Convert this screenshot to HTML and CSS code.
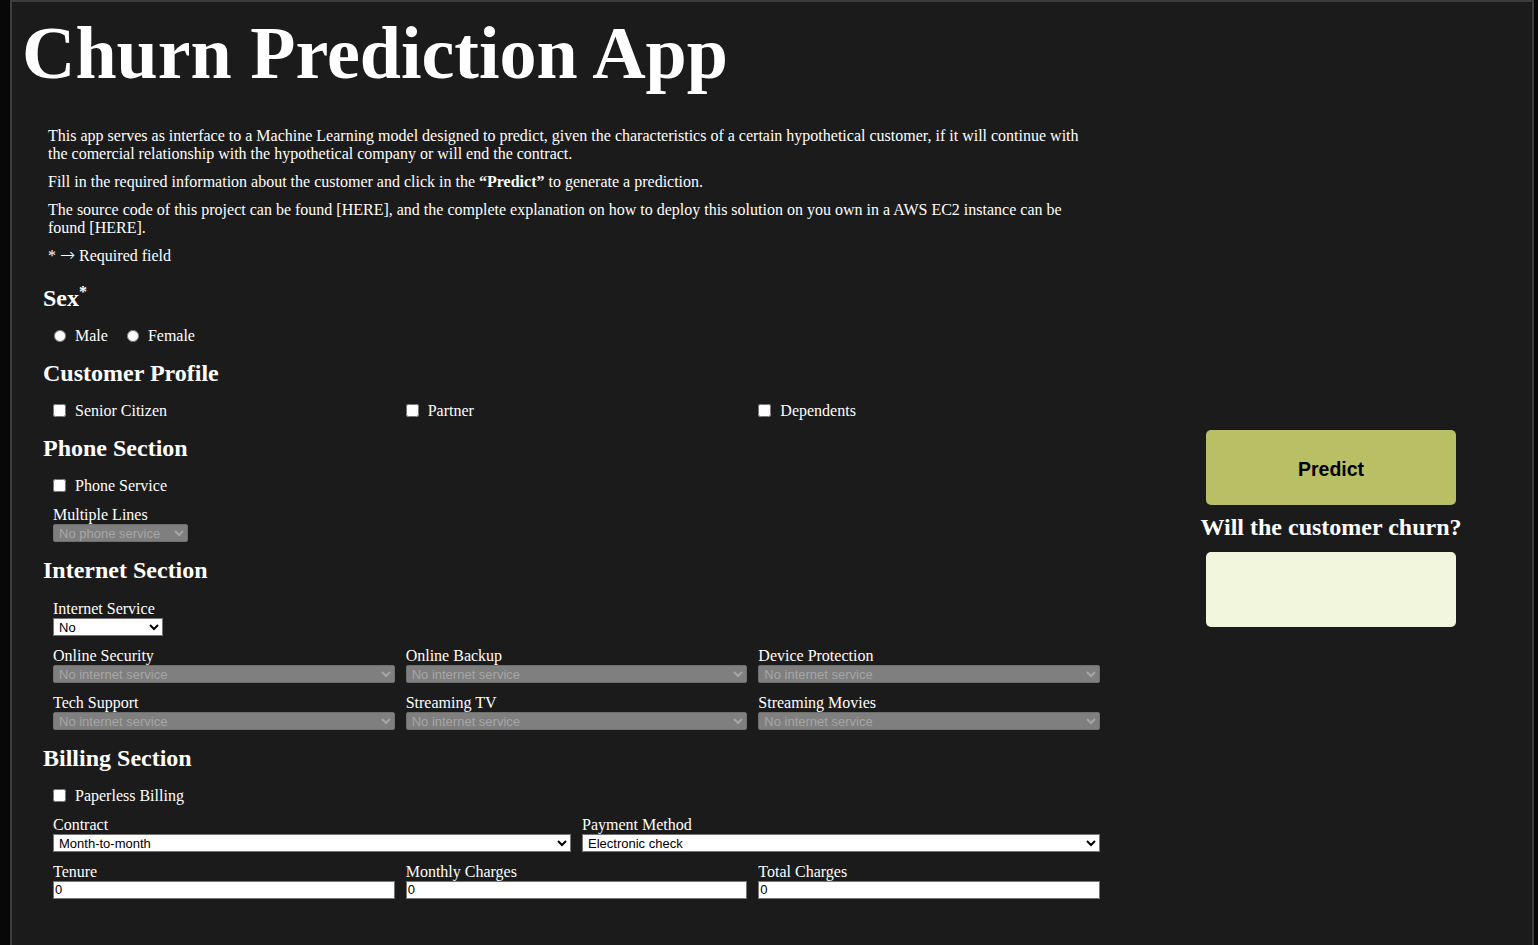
FILE: index.html
```html
<!DOCTYPE html>
<html lang="en">
<head>
<meta charset="utf-8">
<title>Churn Prediction App</title>
<link rel="stylesheet" href="styles.css">
</head>
<body>
<div class="page">
  <h1 class="title">Churn Prediction App</h1>
  <div class="main">
    <div class="left">
      <div class="intro">
        <p>This app serves as interface to a Machine Learning model designed to predict, given the characteristics of a certain hypothetical customer, if it will continue with the comercial relationship with the hypothetical company or will end the contract.</p>
        <p>Fill in the required information about the customer and click in the <b>“Predict”</b> to generate a prediction.</p>
        <p>The source code of this project can be found [HERE], and the complete explanation on how to deploy this solution on you own in a AWS EC2 instance can be found [HERE].</p>
        <p>* <span class="arrow">→</span> Required field</p>
      </div>
      <form class="form">
        <section class="section">
          <h2 class="sec-title">Sex<sup class="req">*</sup></h2>
          <div class="fields">
            <div class="radio-row">
              <label class="choice"><input type="radio" name="sex" class="radio"> Male</label>
              <label class="choice"><input type="radio" name="sex" class="radio"> Female</label>
            </div>
          </div>
        </section>
        <section class="section">
          <h2 class="sec-title">Customer Profile</h2>
          <div class="fields">
            <div class="grid3">
              <label class="choice"><input type="checkbox" class="check"> Senior Citizen</label>
              <label class="choice"><input type="checkbox" class="check"> Partner</label>
              <label class="choice"><input type="checkbox" class="check"> Dependents</label>
            </div>
          </div>
        </section>
        <section class="section">
          <h2 class="sec-title">Phone Section</h2>
          <div class="fields">
            <label class="choice"><input type="checkbox" class="check"> Phone Service</label>
            <div class="field">
              <span class="flabel">Multiple Lines</span>
              <select class="sel sel-off sel-ml" disabled><option>No phone service</option></select>
            </div>
          </div>
        </section>
        <section class="section">
          <h2 class="sec-title">Internet Section</h2>
          <div class="fields">
            <div class="field">
              <span class="flabel">Internet Service</span>
              <select class="sel sel-is"><option>No</option><option>DSL</option><option>Fiber optic</option></select>
            </div>
            <div class="grid3">
              <div class="field"><span class="flabel">Online Security</span><select class="sel sel-off" disabled><option>No internet service</option></select></div>
              <div class="field"><span class="flabel">Online Backup</span><select class="sel sel-off" disabled><option>No internet service</option></select></div>
              <div class="field"><span class="flabel">Device Protection</span><select class="sel sel-off" disabled><option>No internet service</option></select></div>
            </div>
            <div class="grid3">
              <div class="field"><span class="flabel">Tech Support</span><select class="sel sel-off" disabled><option>No internet service</option></select></div>
              <div class="field"><span class="flabel">Streaming TV</span><select class="sel sel-off" disabled><option>No internet service</option></select></div>
              <div class="field"><span class="flabel">Streaming Movies</span><select class="sel sel-off" disabled><option>No internet service</option></select></div>
            </div>
          </div>
        </section>
        <section class="section">
          <h2 class="sec-title">Billing Section</h2>
          <div class="fields">
            <label class="choice"><input type="checkbox" class="check"> Paperless Billing</label>
            <div class="grid2">
              <div class="field"><span class="flabel">Contract</span><select class="sel"><option>Month-to-month</option><option>One year</option><option>Two year</option></select></div>
              <div class="field"><span class="flabel">Payment Method</span><select class="sel"><option>Electronic check</option><option>Mailed check</option></select></div>
            </div>
            <div class="grid3">
              <div class="field"><span class="flabel">Tenure</span><input class="num" type="text" value="0"></div>
              <div class="field"><span class="flabel">Monthly Charges</span><input class="num" type="text" value="0"></div>
              <div class="field"><span class="flabel">Total Charges</span><input class="num" type="text" value="0"></div>
            </div>
          </div>
        </section>
      </form>
    </div>
    <aside class="right">
      <button class="predict" type="button">Predict</button>
      <h2 class="result-title">Will the customer churn?</h2>
      <div class="result-box"></div>
    </aside>
  </div>
</div>
</body>
</html>
```

FILE: styles.css
```css
html, body {
  margin: 0;
  padding: 0;
}
body {
  background: #080808;
  color: #ffffff;
  font-family: "Liberation Serif", "Times New Roman", serif;
  font-size: 16px;
}
.page {
  box-sizing: border-box;
  margin-left: 10px;
  width: 1524px;
  min-height: 945px;
  background: #1b1b1b;
  border: 2px solid #3d3d3d;
  border-bottom: none;
  padding-top: 9px;
}
.title {
  margin: 0;
  padding-left: 10px;
  font-size: 74px;
  line-height: 84px;
  font-weight: bold;
  color: #ffffff;
}
.main {
  display: flex;
  align-items: flex-start;
  margin-top: 32px;
  padding-left: 31px;
}
.left {
  width: 1063px;
}
.intro {
  padding-left: 5px;
  width: 1047px;
}
.intro p {
  margin: 0 0 10px;
  line-height: 18px;
}
.arrow {
  font-family: "DejaVu Sans", sans-serif;
  font-size: 18px;
  line-height: 0;
  font-weight: 200;
}
.form {
  margin-top: 19px;
}
.section {
  margin-bottom: 14.3px;
}
.sec-title {
  margin: 0 0 14.7px;
  font-size: 24px;
  line-height: 28px;
  font-weight: bold;
}
.req {
  font-size: 16px;
  line-height: 0;
  vertical-align: 9px;
}
.fields {
  padding-left: 10px;
  width: 1047px;
  display: flex;
  flex-direction: column;
  gap: 10px;
}
.radio-row {
  display: flex;
  gap: 18px;
}
.choice {
  display: flex;
  align-items: center;
  gap: 9px;
  line-height: 18px;
  height: 18px;
}
.radio {
  margin: 0 0 0 1px;
  width: 12px;
  height: 12px;
}
.check {
  margin: 0;
  width: 13px;
  height: 13px;
}
.grid3 {
  display: grid;
  grid-template-columns: repeat(3, 1fr);
  column-gap: 11px;
}
.grid2 {
  display: grid;
  grid-template-columns: 1fr 1fr;
  column-gap: 11px;
}
.field {
  display: flex;
  flex-direction: column;
  align-items: flex-start;
}
.flabel {
  display: block;
  line-height: 19px;
}
.sel {
  box-sizing: border-box;
  width: 100%;
  height: 18px;
  font-family: "Liberation Sans", Arial, sans-serif;
  font-size: 13px;
  color: #000000;
  background-color: #ffffff;
  border: 1px solid #767676;
  border-radius: 0;
  padding: 0 0 0 1px;
  margin: 0;
}
.sel-off {
  opacity: 1;
  background-color: #7f7f7f;
  color: #a6a6a6;
  border-color: #6f6f6f;
  border-radius: 2px;
}
.sel-ml {
  width: 135px;
}
.sel-is {
  width: 110px;
}
.num {
  box-sizing: border-box;
  width: 100%;
  height: 18px;
  margin: 0;
  padding: 0 1px;
  font-family: "Liberation Sans", Arial, sans-serif;
  font-size: 13px;
  color: #000000;
  background: #ffffff;
  border: 1px solid #767676;
}
.right {
  margin-left: 95px;
  margin-top: 303px;
  width: 260px;
  display: flex;
  flex-direction: column;
  align-items: center;
}
.predict {
  width: 250px;
  height: 75px;
  border: none;
  border-radius: 5px;
  background: #b8bf65;
  color: #000000;
  font-family: "Liberation Sans", Arial, sans-serif;
  font-size: 19.5px;
  font-weight: bold;
  padding: 3px 0 0;
}
.result-title {
  margin: 8px 0 11px;
  font-size: 24px;
  line-height: 28px;
  font-weight: bold;
  white-space: nowrap;
}
.result-box {
  width: 250px;
  height: 75px;
  border-radius: 5px;
  background: #f1f6dc;
}
```
